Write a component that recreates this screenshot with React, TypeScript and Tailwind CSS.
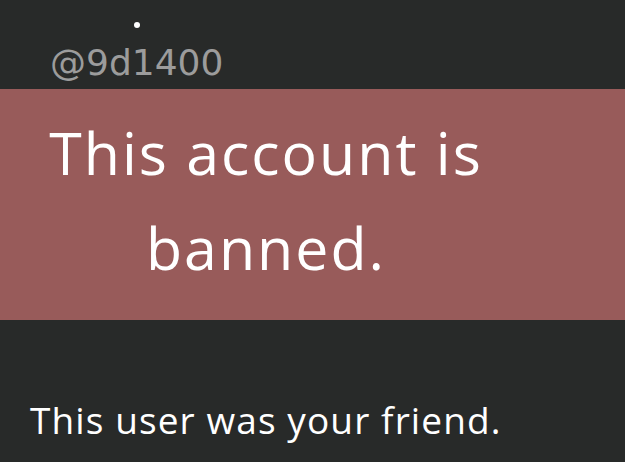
export default function App() {
  return (
    <div className="min-h-[462px] w-full overflow-hidden bg-[#282a29] font-['Open_Sans',sans-serif] text-white">
      <div className="relative h-[89px]">
        <span className="absolute left-[134px] top-[22px] h-[6px] w-[6px] rounded-full bg-white"></span>
        <p className="pl-[50px] pt-[43px] font-['DejaVu_Sans',sans-serif] text-[36px] leading-[40px] text-[#9c9c9c]">
          @9d1400
        </p>
      </div>

      <section className="h-[231px] bg-[#985b5a] pt-[16px]">
        <h2 className="ml-[40px] w-[452px] text-center text-[59px] leading-[95px] tracking-[2px]">
          This account is banned.
        </h2>
      </section>

      <p className="pl-[30px] pt-[77px] text-[37px] leading-[46px] tracking-[1.1px]">
        This user was your friend.
      </p>
    </div>
  );
}
